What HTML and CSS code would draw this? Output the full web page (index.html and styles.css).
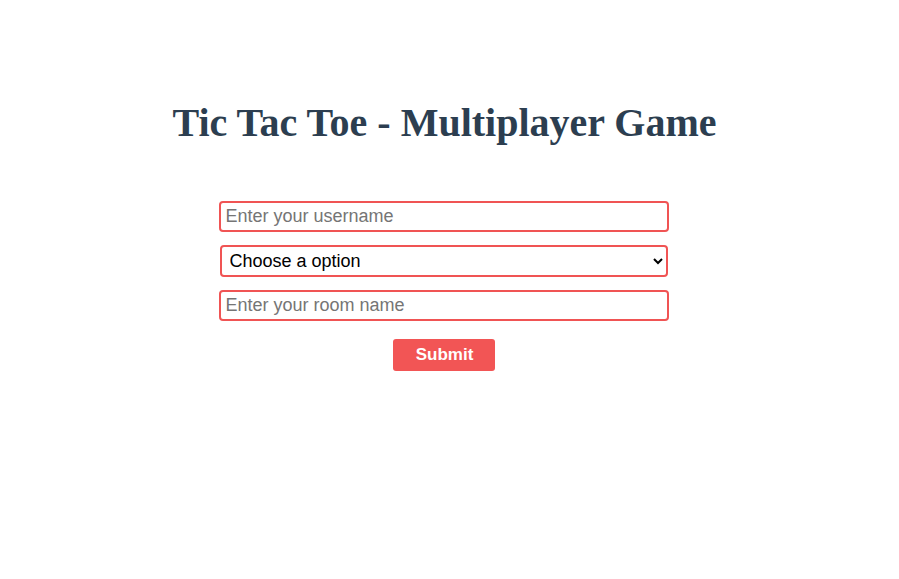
FILE: index.html
```html
<!DOCTYPE html>
<html>
<head>
<meta charset="utf-8">
<link rel="stylesheet" href="styles.css">
</head>
<body>
<div class="page">
  <h1 class="title">Tic Tac Toe - Multiplayer Game</h1>
  <form class="form">
    <input class="field" type="text" placeholder="Enter your username">
    <select class="field select">
      <option>Choose a option</option>
    </select>
    <input class="field" type="text" placeholder="Enter your room name">
    <button class="submit" type="button">Submit</button>
  </form>
</div>
</body>
</html>
```
FILE: styles.css
```css
html, body {
  margin: 0;
  padding: 0;
  background: #fff;
}
.page {
  width: 887px;
  display: flex;
  flex-direction: column;
  align-items: center;
  padding-top: 100px;
}
.title {
  margin: 0;
  padding-left: 2px;
  font-family: "Liberation Serif", serif;
  font-size: 40px;
  font-weight: bold;
  color: #2c3e50;
  line-height: 46px;
}
.form {
  margin-top: 55px;
  width: 450px;
  display: flex;
  flex-direction: column;
  align-items: center;
  gap: 13px;
}
.field {
  box-sizing: border-box;
  width: 450px;
  height: 31px;
  border: 2px solid #f05454;
  border-radius: 4px;
  padding: 0 5px;
  font-family: "Liberation Sans", Arial, sans-serif;
  font-size: 18px;
  color: #000;
  background: #fff;
  outline: none;
}
.field::placeholder {
  color: #757575;
}
.select {
  width: 448px;
  height: 32px;
  padding: 0 4px 0 4px;
}
.submit {
  margin-top: 5px;
  width: 102px;
  height: 32px;
  padding: 0 0 0 2px;
  border: none;
  border-radius: 3px;
  background: #f25555;
  color: #fff;
  font-family: "Liberation Sans", Arial, sans-serif;
  font-weight: bold;
  font-size: 17px;
}
```
